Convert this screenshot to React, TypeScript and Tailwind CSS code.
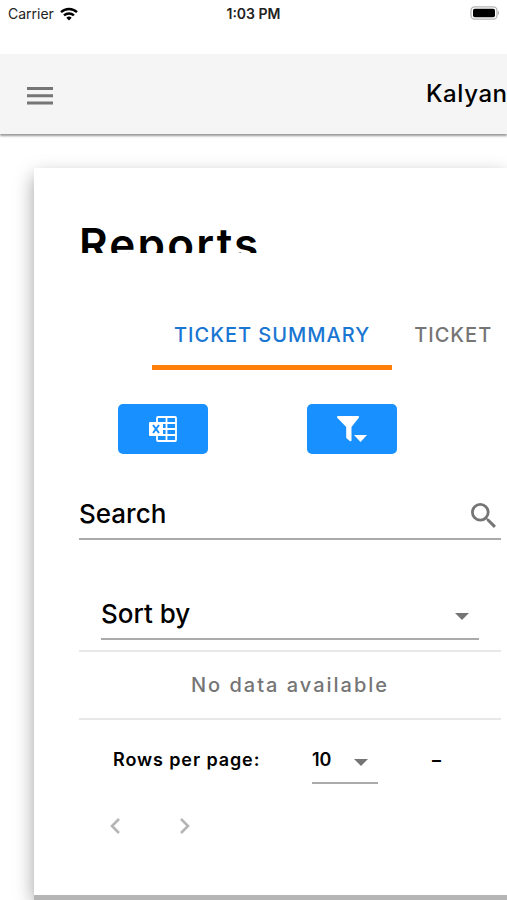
import { useState } from "react";

function Caret() {
  return (
    <svg viewBox="0 0 14 7" className="pointer-events-none h-[7px] w-3.5 shrink-0 fill-[#757575]" aria-hidden="true">
      <path d="M0 0h14L7 7z" />
    </svg>
  );
}

function StatusBar() {
  return (
    <div className="grid h-[54px] grid-cols-3 items-start px-2 pt-1 text-[14px] leading-5 text-[#222]">
      <div className="flex items-center gap-1.5">
        <span>Carrier</span>
        <svg viewBox="0 0 18 14" className="h-3.5 w-[18px]" fill="none" stroke="#000" strokeWidth="2.4" aria-hidden="true">
          <path d="M1 5.2a11.6 11.6 0 0 1 16 0" />
          <path d="M4 8.4a7.4 7.4 0 0 1 10 0" />
          <path d="M6.3 10.8a4 4 0 0 1 5.4 0L9 13.6z" fill="#000" stroke="none" />
        </svg>
      </div>
      <span className="text-center font-semibold">1:03 PM</span>
      <svg viewBox="0 0 30 14" className="mt-0.5 h-3.5 w-[30px] justify-self-end" aria-hidden="true">
        <rect x="2" y="0.8" width="26" height="12.4" rx="3.6" fill="#fff" stroke="#b5b5b5" strokeWidth="1.3" />
        <rect x="4" y="2.7" width="22" height="8.6" rx="1.8" fill="#000" />
        <path d="M29 5v4c1.4-.7 1.4-3.3 0-4z" fill="#aaa" />
      </svg>
    </div>
  );
}

function ExcelIcon() {
  return (
    <svg viewBox="0 0 28 26" className="h-[26px] w-7" fill="none" aria-hidden="true">
      <rect x="8" y="1" width="19" height="24" rx="1" stroke="#fff" strokeWidth="1.8" />
      <path d="M17.5 1v24M8 7h19M8 13h19M8 19h19" stroke="#fff" strokeWidth="1.8" />
      <rect x="0" y="6" width="14" height="14" rx="1" fill="#fff" />
      <path d="M4 9l6 8M10 9l-6 8" stroke="#1890ff" strokeWidth="2" />
    </svg>
  );
}

function FilterIcon() {
  return (
    <svg viewBox="0 0 30 28" className="h-7 w-[30px] fill-white" aria-hidden="true">
      <path d="M1 1h20a1 1 0 0 1 .8 1.7L14.5 12v13.2c0 1-.9 1.3-1.7.7l-3-2.4c-.4-.3-.6-.7-.6-1.2V12L.2 2.7C-.3 2 .1 1 1 1z" />
      <path d="M17 20h13l-6.5 7z" />
    </svg>
  );
}

const actionClass = "flex h-[50px] w-[90px] items-center justify-center rounded-[5px] bg-[#1890ff]";

export default function App() {
  const [query, setQuery] = useState("");

  return (
    <div className="overflow-hidden bg-white pb-[5px] font-['Inter','Liberation_Sans',sans-serif] text-black">
      <StatusBar />

      <header className="flex h-20 items-center justify-between bg-[#f5f5f5] pl-[27px] shadow-[0_2px_2px_0_rgba(0,0,0,0.4)]">
        <button type="button" aria-label="Open menu" className="mt-1">
          <svg viewBox="0 0 26 18" className="h-[18px] w-[26px] fill-[#757575]" aria-hidden="true">
            <path d="M0 0h26v3H0zM0 7.3h26v3H0zM0 14.6h26v3H0z" />
          </svg>
        </button>
        <span className="w-[81px] overflow-hidden text-[24px] leading-8 font-medium tracking-wide whitespace-nowrap">
          Kalyan
        </span>
      </header>

      <main className="mt-[34px] ml-[34px] bg-white pt-[54px] pr-1.5 pb-[61px] pl-[45px] shadow-[0_5px_0_0_#b5b5b5,0_8px_18px_0_rgba(0,0,0,0.38)]">
        <h1 className="h-[31px] overflow-hidden text-[44px] leading-[44px] font-semibold tracking-wider">Reports</h1>

        <div role="tablist" className="mt-[47px] ml-[73px] flex h-[70px] overflow-hidden text-[20px] font-medium tracking-wider whitespace-nowrap">
          <button
            type="button"
            role="tab"
            aria-selected="true"
            className="shrink-0 border-b-[5px] border-[#ff7f0a] px-[22px] pt-1 text-[#1976d2]"
          >
            TICKET SUMMARY
          </button>
          <button
            type="button"
            role="tab"
            aria-selected="false"
            className="shrink-0 border-b-[5px] border-transparent px-[22px] pt-1 text-[#757575]"
          >
            TICKET
          </button>
        </div>

        <div className="mt-[34px] ml-[39px] flex gap-[99px]">
          <button type="button" aria-label="Export to Excel" className={actionClass}>
            <ExcelIcon />
          </button>
          <button type="button" aria-label="Filter" className={actionClass}>
            <FilterIcon />
          </button>
        </div>

        <div className="mt-[35px] flex h-[51px] items-center border-b-2 border-[#aaa] pr-[5px]">
          <input
            type="text"
            aria-label="Search"
            placeholder="Search"
            value={query}
            onChange={(event) => setQuery(event.target.value)}
            className="h-full min-w-0 flex-1 bg-transparent text-[26px] font-medium outline-none placeholder:text-black"
          />
          <svg viewBox="3 3 17.5 17.5" className="mt-1 size-[25px] shrink-0 fill-[#757575]" aria-hidden="true">
            <path d="M15.5 14h-.79l-.28-.27A6.47 6.47 0 0 0 16 9.5 6.5 6.5 0 1 0 9.5 16c1.61 0 3.09-.59 4.23-1.57l.27.28v.79l5 4.99L20.49 19l-4.99-5zm-6 0C7.01 14 5 11.99 5 9.5S7.01 5 9.5 5 14 7.01 14 9.5 11.99 14 9.5 14z" />
          </svg>
        </div>

        <div className="mx-[22px] mt-[49px] grid h-[51px] grid-cols-1 items-center border-b-2 border-[#aaa]">
          <select
            aria-label="Sort by"
            className="col-start-1 row-start-1 h-full w-full appearance-none bg-transparent text-[26px] font-medium outline-none"
          >
            <option>Sort by</option>
          </select>
          <span className="pointer-events-none col-start-1 row-start-1 mt-1.5 mr-2.5 justify-self-end">
            <Caret />
          </span>
        </div>

        <table className="mt-2.5 w-full border-y-2 border-[#e8e8e8]">
          <tbody>
            <tr>
              <td className="h-[68px] text-center text-[20px] font-medium tracking-widest text-[#757575]">
                No data available
              </td>
            </tr>
          </tbody>
        </table>

        <div className="mt-[17px] flex h-[47px] items-start pl-[34px] text-[18px] leading-[46px] font-semibold">
          <label htmlFor="rows" className="w-[199px] tracking-wider whitespace-nowrap">
            Rows per page:
          </label>
          <div className="grid h-full w-[66px] items-center border-b-2 border-[#aaa]">
            <select id="rows" className="col-start-1 row-start-1 h-full w-full appearance-none bg-transparent outline-none">
              <option>10</option>
            </select>
            <span className="pointer-events-none col-start-1 row-start-1 mt-1 mr-2.5 justify-self-end">
              <Caret />
            </span>
          </div>
          <span className="ml-[54px]">–</span>
        </div>

        <nav aria-label="Pagination" className="mt-[34px] flex gap-[60px] pl-[31px]">
          <button type="button" aria-label="Previous page" disabled>
            <svg viewBox="0 0 10 16" className="h-4 w-2.5" fill="none" stroke="#b5b5b5" strokeWidth="2.6" aria-hidden="true">
              <path d="M9 1L2 8l7 7" />
            </svg>
          </button>
          <button type="button" aria-label="Next page" disabled>
            <svg viewBox="0 0 10 16" className="h-4 w-2.5" fill="none" stroke="#b5b5b5" strokeWidth="2.6" aria-hidden="true">
              <path d="M1 1l7 7-7 7" />
            </svg>
          </button>
        </nav>
      </main>
    </div>
  );
}
